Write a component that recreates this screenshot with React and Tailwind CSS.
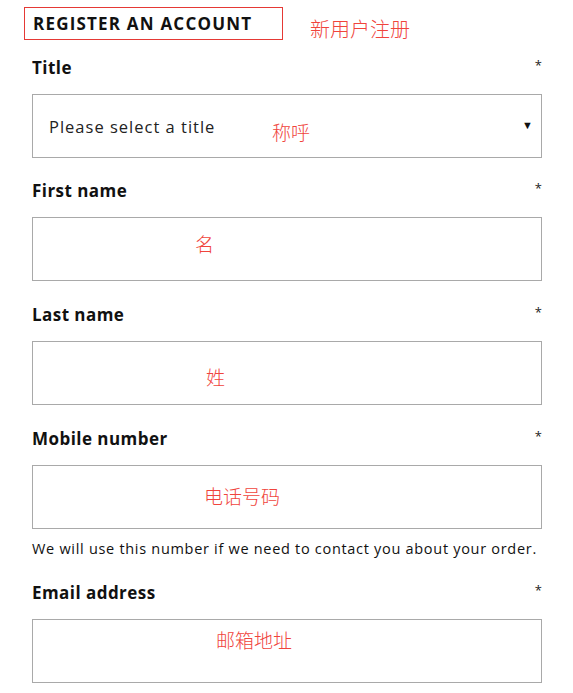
import React from 'react';

const sans = "font-['Open_Sans','Liberation_Sans',sans-serif]";
const cjk = "font-['Noto_Sans_CJK_SC',sans-serif]";

function Note({ text, left, top, size = 'text-[19px]' }) {
  return (
    <span
      className={`absolute ${cjk} ${size} leading-none text-[#f0443c] font-light`}
      style={{ left, top }}
    >
      {text}
    </span>
  );
}

function Field({ label, note, noteLeft, noteTop, select, helper, gap = 'mb-[21px]' }) {
  return (
    <div className={gap}>
      <div className="flex h-[24px] items-center justify-between">
        <span className="mt-[1px] text-[17px] font-bold tracking-[0.45px] text-[#111]">{label}</span>
        <span className="text-[13px] leading-none text-[#222] -mt-[4px]">*</span>
      </div>
      <div className="relative mt-[15px] h-[64px] border border-[#a9a9a9] bg-white">
        {select && (
          <>
            <span className="absolute left-[16px] top-[20px] text-[16.5px] tracking-[1px] text-[#222]">
              Please select a title
            </span>
            <span className="absolute right-[8px] top-[24px] text-[11px] leading-none text-[#111]">▼</span>
          </>
        )}
        {note && <Note text={note} left={noteLeft} top={noteTop} />}
      </div>
      {helper && (
        <p className="mt-[10px] h-[20px] text-[14.5px] leading-[20px] tracking-[0.7px] text-[#111] whitespace-nowrap">
          {helper}
        </p>
      )}
    </div>
  );
}

export default function App() {
  return (
    <div className={`w-[573px] h-[693px] overflow-hidden bg-white ${sans}`}>
      <div className="relative pl-[24px] pt-[7px]">
        <div className="flex h-[33px] w-[259px] items-center border border-[#e53935] pl-[8px]">
          <span className="text-[17px] font-bold tracking-[1.2px] text-[#111]">REGISTER AN ACCOUNT</span>
        </div>
        <Note text="新用户注册" left={310} top={19} size="text-[20px]" />
      </div>
      <div className="mt-[15px] pl-[32px] pr-[31px]">
        <Field label="Title" select note="称呼" noteLeft={239} noteTop={27} gap="mb-[20px]" />
        <Field label="First name" note="名" noteLeft={162} noteTop={16} />
        <Field label="Last name" note="姓" noteLeft={173} noteTop={25} />
        <Field
          label="Mobile number"
          note="电话号码"
          noteLeft={171}
          noteTop={20}
          helper="We will use this number if we need to contact you about your order."
        />
        <Field label="Email address" note="邮箱地址" noteLeft={183} noteTop={10} gap="" />
      </div>
    </div>
  );
}
